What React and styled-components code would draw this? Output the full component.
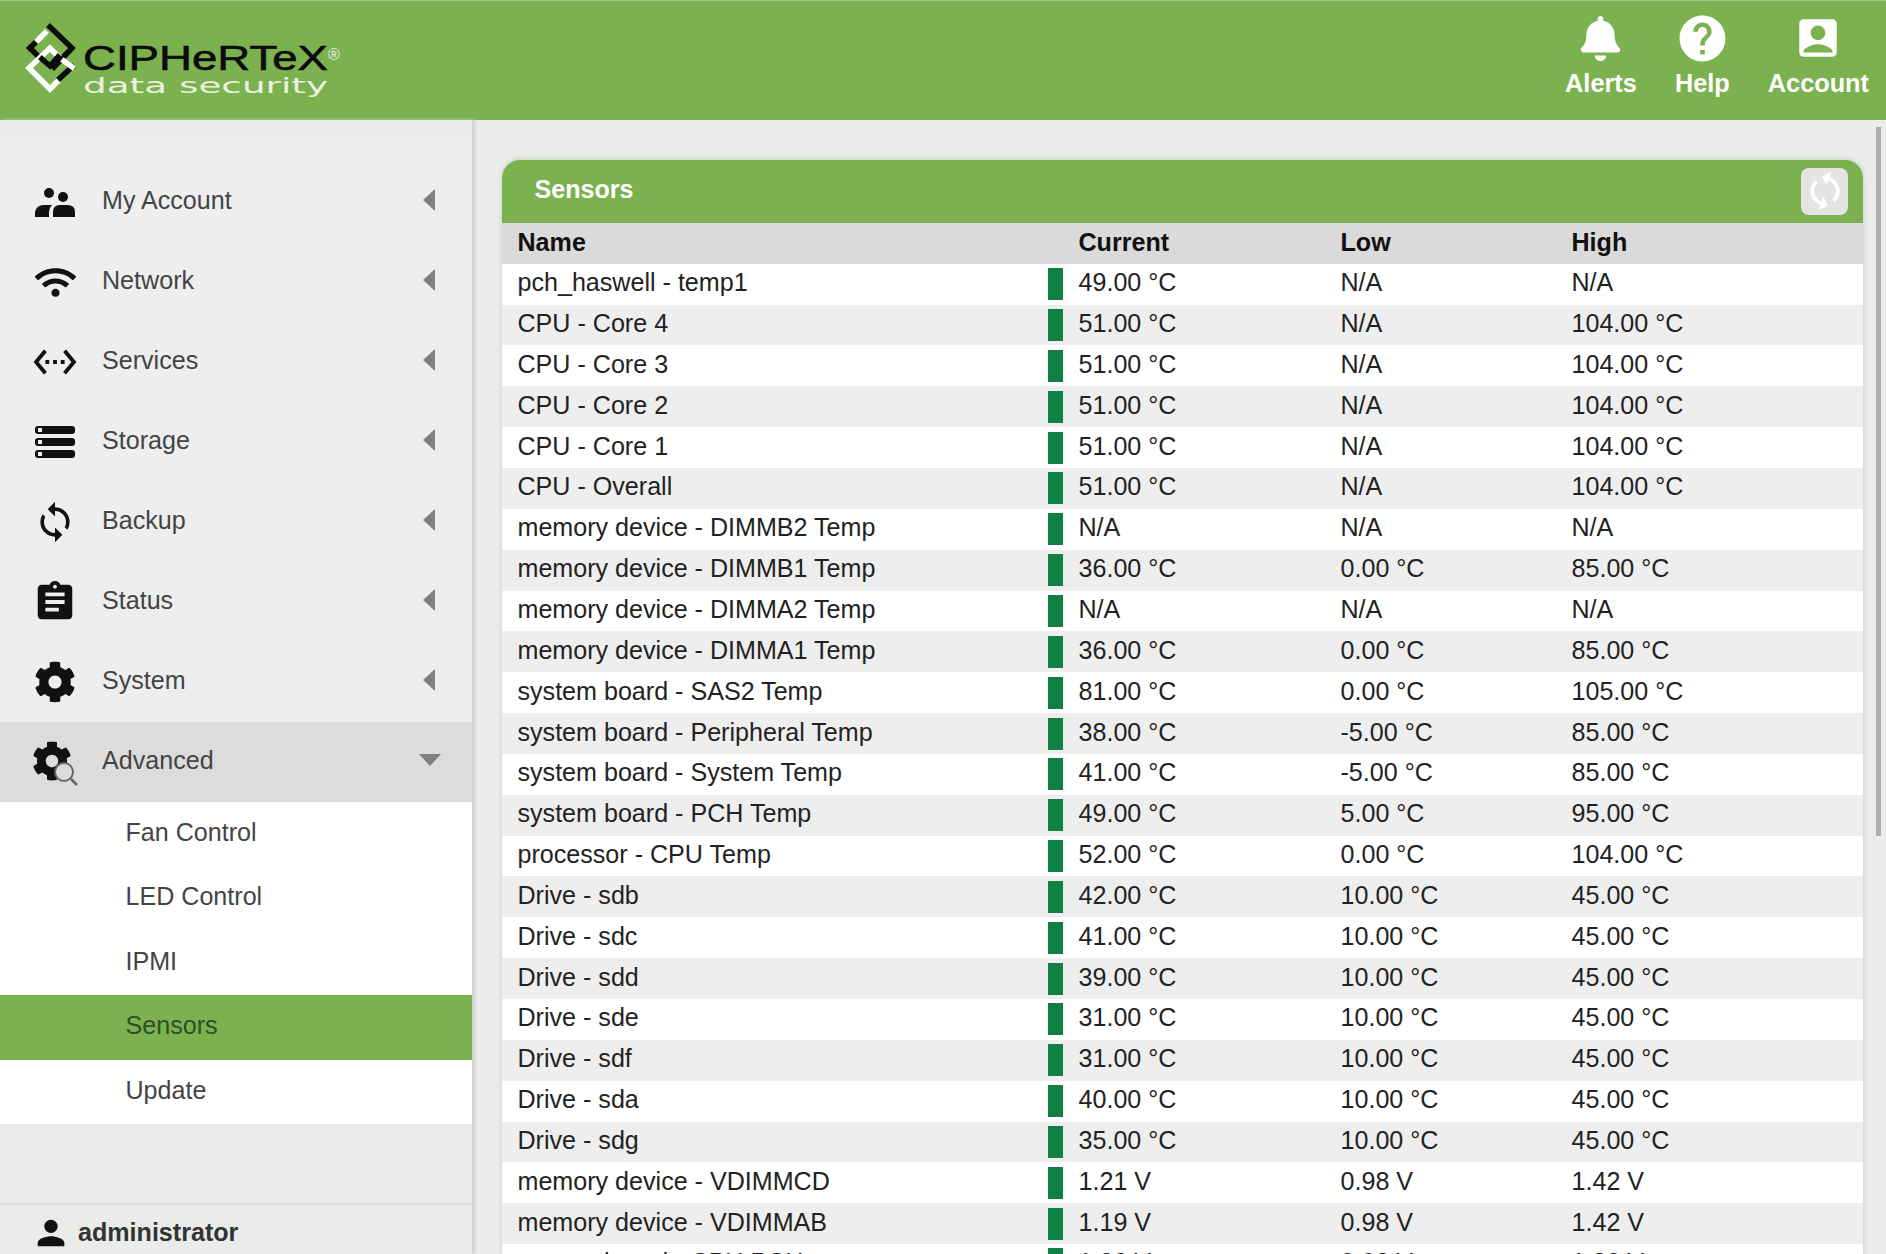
import React from "react";
import styled, { createGlobalStyle } from "styled-components";
import { FaWifi, FaCog, FaBell } from "react-icons/fa";
import {
  MdSettingsEthernet,
  MdSync,
  MdAssignment,
  MdPerson,
  MdHelp,
  MdAccountBox,
} from "react-icons/md";

const GREEN = "#7cb150";

const GlobalStyle = createGlobalStyle`
  html, body {
    margin: 0;
    padding: 0;
    height: 100%;
    overflow: hidden;
    background: #e9ece8;
    font-family: "Liberation Sans", Arial, sans-serif;
  }
`;

const Page = styled.div`
  position: relative;
  width: 1886px;
  height: 1254px;
  overflow: hidden;
  display: flex;
  flex-direction: column;
`;

const Header = styled.header`
  flex: 0 0 120px;
  box-sizing: border-box;
  display: flex;
  align-items: flex-start;
  justify-content: space-between;
  background: ${GREEN};
  border-top: 1px solid #a3c28a;
`;

const Logo = styled.svg`
  margin: 14px 0 0 22px;
  width: 330px;
  height: 90px;
`;

const HeaderNav = styled.nav`
  display: flex;
  gap: 38px;
  margin: 12px 17px 0 0;
`;

const HeaderLink = styled.a`
  display: flex;
  flex-direction: column;
  align-items: center;
  color: #fff;
  font-size: 25.3px;
  font-weight: 700;
  line-height: 30px;
`;

const HeaderIcon = styled.span`
  height: 50px;
  margin-bottom: 5px;
  display: flex;
  align-items: center;
  justify-content: center;
`;

const Main = styled.div`
  flex: 1;
  display: flex;
  min-height: 0;
`;

const Sidebar = styled.aside`
  flex: 0 0 472px;
  display: flex;
  flex-direction: column;
  box-shadow: 3px 0 3px #cfd3ce;
  background: #e9ece8;
`;

const Menu = styled.ul`
  margin: 0;
  padding: 0;
  list-style: none;
  background: linear-gradient(#e9ece8 0, #eeeeee 40px);
`;

const MenuSpacer = styled.li`
  height: 42px;
`;

const MenuItem = styled.li`
  box-sizing: border-box;
  display: flex;
  align-items: center;
  height: 80px;
  padding: 0 31px 4px 30px;
  color: #444;
  font-size: 25.1px;
  background: ${(p) => (p.$open ? "#dcdcdc" : "transparent")};
`;

const MenuIcon = styled.span`
  flex: 0 0 50px;
  height: 50px;
  display: flex;
  align-items: center;
  justify-content: center;
  margin: 4px 22px 0 0;
  color: #111;
`;

const MenuLabel = styled.span`
  flex: 1;
`;

const CaretLeft = styled.span`
  margin-right: 6px;
  border-style: solid;
  border-width: 11px 12px 11px 0;
  border-color: transparent #808080 transparent transparent;
`;

const CaretDown = styled.span`
  border-style: solid;
  border-width: 12px 11px 0 11px;
  border-color: #808080 transparent transparent transparent;
`;

const SubMenu = styled.ul`
  margin: 0;
  padding: 0;
  list-style: none;
  background: #fff;
`;

const SubItem = styled.li`
  height: 64.4px;
  line-height: 61px;
  padding-left: 125.5px;
  font-size: 25.1px;
  color: ${(p) => (p.$active ? "#2f4f24" : "#444")};
  background: ${(p) => (p.$active ? GREEN : "transparent")};
`;

const SidebarFill = styled.div`
  flex: 1;
  background: #e9ece8;
`;

const UserBar = styled.div`
  box-sizing: border-box;
  flex: 0 0 51px;
  display: flex;
  align-items: center;
  gap: 7px;
  padding: 6px 0 0 31px;
  border-top: 2px solid #dadcd9;
  color: #333;
  font-size: 25.1px;
  font-weight: 700;
`;

const Content = styled.main`
  flex: 1;
  min-width: 0;
  padding: 40px 23px 0 29.5px;
  overflow: hidden;
`;

const Panel = styled.section`
  background: #fff;
  border-radius: 18px 18px 0 0;
  box-shadow: 0 -1px 4px #c8ccc6;
  overflow: hidden;
`;

const PanelHeader = styled.div`
  box-sizing: border-box;
  height: 63px;
  display: flex;
  align-items: center;
  justify-content: space-between;
  padding: 0 15px 5px 33px;
  background: ${GREEN};
  color: #fff;
  font-size: 25.1px;
  font-weight: 700;
`;

const RefreshButton = styled.button`
  width: 47px;
  height: 47px;
  padding: 0;
  margin-top: 4px;
  display: flex;
  align-items: center;
  justify-content: center;
  border: none;
  border-radius: 8px;
  background: #e4e5e2;
  color: #fff;
  svg {
    transform: rotate(18deg);
  }
`;

const Table = styled.table`
  width: 100%;
  border-collapse: collapse;
  table-layout: fixed;
  font-size: 25.1px;
  color: #222;
`;

const HeadCell = styled.th`
  box-sizing: border-box;
  height: 40.8px;
  padding: 0 0 2px ${(p) => p.$pad || 0}px;
  background: #dadada;
  color: #111;
  font-weight: 700;
  text-align: left;
`;

const Row = styled.tr`
  height: 40.85px;
  background: ${(p) => (p.$even ? "#eeeeee" : "#fff")};
`;

const Cell = styled.td`
  box-sizing: border-box;
  padding: 0 0 3px ${(p) => p.$pad || 0}px;
  white-space: nowrap;
`;

const CurrentWrap = styled.div`
  display: flex;
  align-items: center;
  gap: 16px;
`;

const StatusBar = styled.span`
  width: 15px;
  height: 32px;
  margin-top: 3px;
  background: #0e8044;
`;

const ScrollThumb = styled.div`
  position: absolute;
  top: 127px;
  right: 5px;
  width: 5px;
  height: 709px;
  background: #aeb0ad;
`;

const PeopleIcon = () => (
  <svg width="40" height="29" viewBox="0 0 40 29" fill="#111">
    <circle cx="14" cy="5" r="5" />
    <circle cx="28" cy="9" r="5" />
    <path d="M0 29V24Q1 18 8 17H17Q14 20 14 24V29Z" />
    <path d="M18 29V24Q18 17 25 17H32Q40 17 40 24V29Z" />
  </svg>
);

const StorageIcon = () => (
  <svg width="40" height="32" viewBox="0 0 40 32">
    {[0, 12, 24].map((y) => (
      <g key={y}>
        <rect x="0" y={y} width="40" height="8" rx="3" fill="#111" />
        <rect x="3" y={y + 2} width="4" height="4" fill="#eee" />
      </g>
    ))}
  </svg>
);

const AdvancedIcon = () => (
  <svg width="48" height="48" viewBox="0 0 48 48">
    <g transform="translate(1 3)">
      <FaCog size={40} color="#111" />
    </g>
    <circle cx="33" cy="34" r="9" fill="#dcdcdc" stroke="#666" strokeWidth="2" />
    <line x1="40" y1="41" x2="46" y2="47" stroke="#666" strokeWidth="2.5" />
  </svg>
);

const CiphertexLogo = () => (
  <Logo viewBox="0 0 330 90">
    <g fill="none" strokeWidth="5.5" strokeLinecap="square">
      <polyline points="28,12 50,33 32,52" stroke="#0c0c0c" />
      <polyline points="8,33 15,40" stroke="#0c0c0c" />
      <polyline points="8,33 14,27" stroke="#0c0c0c" />
      <polyline points="16,25 23,18" stroke="#fff" />
      <polyline points="36,41 28,33 7,53 28,74 35,67" stroke="#fff" />
      <polyline points="38,63 50,52" stroke="#0c0c0c" />
      <polyline points="42,46 50,52" stroke="#fff" />
      <polyline points="20,44 28,51 36,42" stroke="#0c0c0c" />
    </g>
    <text x="61" y="55" fontFamily="'Liberation Sans', sans-serif" fontSize="35" fill="#0c0c0c" stroke="#0c0c0c" strokeWidth="0.6" textLength="245" lengthAdjust="spacingAndGlyphs">CIPHeRTeX</text>
    <text x="306" y="45" fontFamily="'Liberation Sans', sans-serif" fontSize="16" fill="#e6ece0">®</text>
    <text x="61" y="78" fontFamily="'DejaVu Sans', sans-serif" fontSize="21" fill="#e8f2df" textLength="245" lengthAdjust="spacingAndGlyphs">data security</text>
  </Logo>
);

const MENU = [
  { label: "My Account", icon: <PeopleIcon /> },
  { label: "Network", icon: <FaWifi size={41} /> },
  { label: "Services", icon: <MdSettingsEthernet size={46} /> },
  { label: "Storage", icon: <StorageIcon /> },
  { label: "Backup", icon: <MdSync size={44} /> },
  { label: "Status", icon: <MdAssignment size={46} /> },
  { label: "System", icon: <FaCog size={42} /> },
];

const SUB_MENU = ["Fan Control", "LED Control", "IPMI", "Sensors", "Update"];

const SENSORS = [
  ["pch_haswell - temp1", "49.00 °C", "N/A", "N/A"],
  ["CPU - Core 4", "51.00 °C", "N/A", "104.00 °C"],
  ["CPU - Core 3", "51.00 °C", "N/A", "104.00 °C"],
  ["CPU - Core 2", "51.00 °C", "N/A", "104.00 °C"],
  ["CPU - Core 1", "51.00 °C", "N/A", "104.00 °C"],
  ["CPU - Overall", "51.00 °C", "N/A", "104.00 °C"],
  ["memory device - DIMMB2 Temp", "N/A", "N/A", "N/A"],
  ["memory device - DIMMB1 Temp", "36.00 °C", "0.00 °C", "85.00 °C"],
  ["memory device - DIMMA2 Temp", "N/A", "N/A", "N/A"],
  ["memory device - DIMMA1 Temp", "36.00 °C", "0.00 °C", "85.00 °C"],
  ["system board - SAS2 Temp", "81.00 °C", "0.00 °C", "105.00 °C"],
  ["system board - Peripheral Temp", "38.00 °C", "-5.00 °C", "85.00 °C"],
  ["system board - System Temp", "41.00 °C", "-5.00 °C", "85.00 °C"],
  ["system board - PCH Temp", "49.00 °C", "5.00 °C", "95.00 °C"],
  ["processor - CPU Temp", "52.00 °C", "0.00 °C", "104.00 °C"],
  ["Drive - sdb", "42.00 °C", "10.00 °C", "45.00 °C"],
  ["Drive - sdc", "41.00 °C", "10.00 °C", "45.00 °C"],
  ["Drive - sdd", "39.00 °C", "10.00 °C", "45.00 °C"],
  ["Drive - sde", "31.00 °C", "10.00 °C", "45.00 °C"],
  ["Drive - sdf", "31.00 °C", "10.00 °C", "45.00 °C"],
  ["Drive - sda", "40.00 °C", "10.00 °C", "45.00 °C"],
  ["Drive - sdg", "35.00 °C", "10.00 °C", "45.00 °C"],
  ["memory device - VDIMMCD", "1.21 V", "0.98 V", "1.42 V"],
  ["memory device - VDIMMAB", "1.19 V", "0.98 V", "1.42 V"],
  ["system board - CPU PCH", "1.80 V", "0.98 V", "1.80 V"],
];

const App = () => {
  return (
    <Page>
      <GlobalStyle />
      <Header>
        <CiphertexLogo />
        <HeaderNav>
          <HeaderLink>
            <HeaderIcon>
              <FaBell size={45} />
            </HeaderIcon>
            Alerts
          </HeaderLink>
          <HeaderLink>
            <HeaderIcon>
              <MdHelp size={55} />
            </HeaderIcon>
            Help
          </HeaderLink>
          <HeaderLink>
            <HeaderIcon>
              <MdAccountBox size={50} />
            </HeaderIcon>
            Account
          </HeaderLink>
        </HeaderNav>
      </Header>
      <Main>
        <Sidebar>
          <Menu>
            <MenuSpacer />
            {MENU.map((item) => (
              <MenuItem key={item.label}>
                <MenuIcon>{item.icon}</MenuIcon>
                <MenuLabel>{item.label}</MenuLabel>
                <CaretLeft />
              </MenuItem>
            ))}
            <MenuItem $open>
              <MenuIcon>
                <AdvancedIcon />
              </MenuIcon>
              <MenuLabel>Advanced</MenuLabel>
              <CaretDown />
            </MenuItem>
            <SubMenu>
              {SUB_MENU.map((name) => (
                <SubItem key={name} $active={name === "Sensors"}>
                  {name}
                </SubItem>
              ))}
            </SubMenu>
          </Menu>
          <SidebarFill />
          <UserBar>
            <MdPerson size={40} color="#111" />
            administrator
          </UserBar>
        </Sidebar>
        <Content>
          <Panel>
            <PanelHeader>
              Sensors
              <RefreshButton aria-label="Refresh">
                <MdSync size={44} />
              </RefreshButton>
            </PanelHeader>
            <Table>
              <colgroup>
                <col width="546" />
                <col width="293" />
                <col width="231" />
                <col />
              </colgroup>
              <thead>
                <tr>
                  <HeadCell $pad={16}>Name</HeadCell>
                  <HeadCell $pad={31}>Current</HeadCell>
                  <HeadCell>Low</HeadCell>
                  <HeadCell>High</HeadCell>
                </tr>
              </thead>
              <tbody>
                {SENSORS.map((s, i) => (
                  <Row key={s[0]} $even={i % 2 === 1}>
                    <Cell $pad={16}>{s[0]}</Cell>
                    <Cell>
                      <CurrentWrap>
                        <StatusBar />
                        {s[1]}
                      </CurrentWrap>
                    </Cell>
                    <Cell>{s[2]}</Cell>
                    <Cell>{s[3]}</Cell>
                  </Row>
                ))}
              </tbody>
            </Table>
          </Panel>
        </Content>
      </Main>
      <ScrollThumb />
    </Page>
  );
};

export default App;
